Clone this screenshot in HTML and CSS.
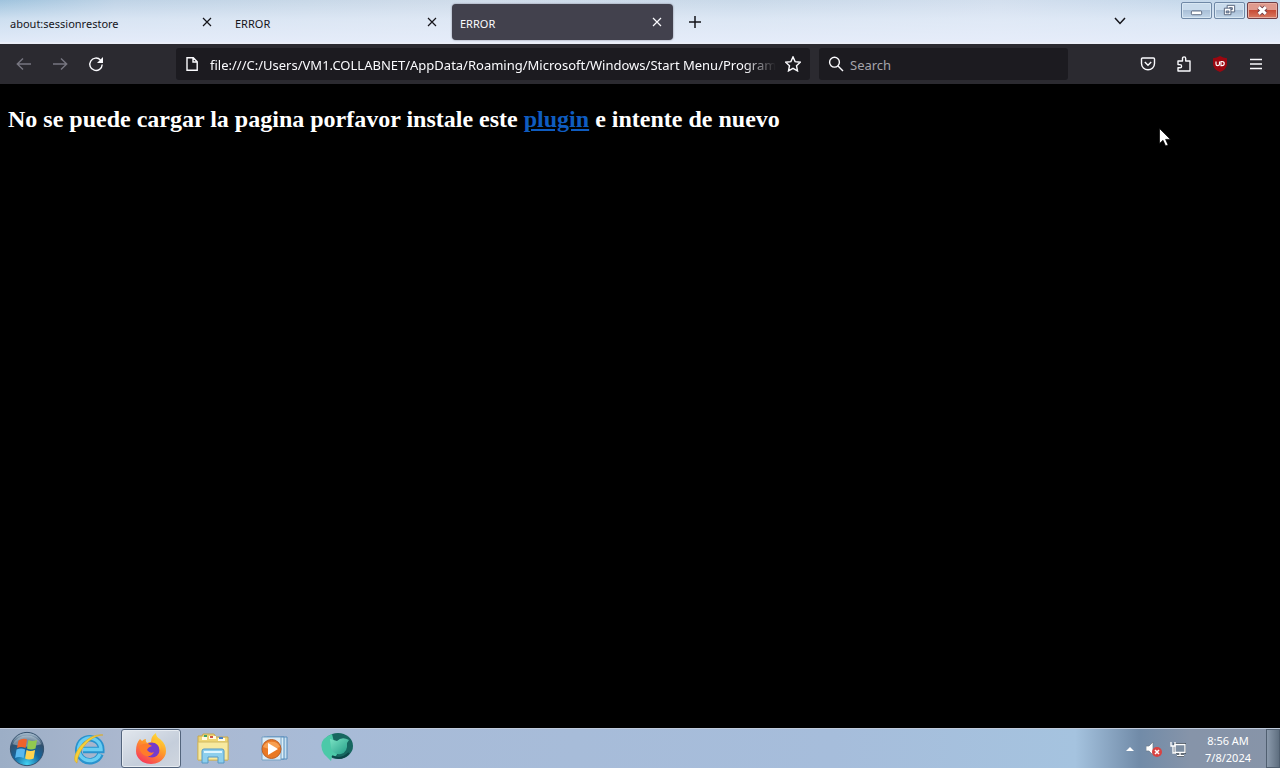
FILE: index.html
```html
<!DOCTYPE html>
<html lang="es">
<head>
<meta charset="utf-8">
<meta name="viewport" content="width=device-width, initial-scale=1">
<title>ERROR</title>
<link rel="stylesheet" href="styles.css">
</head>
<body>
<header class="titlebar">
  <div class="tabs">
    <div class="tab"><button class="tab-title">about:sessionrestore</button><button class="tab-close" aria-label="Close tab"><svg viewBox="0 0 10 10"><path d="M1 1l8 8M9 1l-8 8"/></svg></button></div>
    <div class="tab"><button class="tab-title">ERROR</button><button class="tab-close" aria-label="Close tab"><svg viewBox="0 0 10 10"><path d="M1 1l8 8M9 1l-8 8"/></svg></button></div>
    <div class="tab active"><button class="tab-title">ERROR</button><button class="tab-close" aria-label="Close tab"><svg viewBox="0 0 10 10"><path d="M1 1l8 8M9 1l-8 8"/></svg></button></div>
    <button class="new-tab" aria-label="New tab"><svg viewBox="0 0 12 12"><path d="M6 0v12M0 6h12"/></svg></button>
  </div>
  <button class="all-tabs" aria-label="List all tabs"><svg viewBox="0 0 12 8"><path d="M1 1l5 5.500 5-5.500"/></svg></button>
  <div class="window-buttons">
    <button class="win" aria-label="Minimize"><svg viewBox="0 0 30 16"><rect x="9.500" y="8.500" width="11" height="4" rx="1" fill="#fff" stroke="#53617a"/></svg></button>
    <button class="win" aria-label="Restore"><svg viewBox="0 0 30 16"><path d="M12.500 2.500h8v7h-8z" fill="#fff" stroke="#53617a"/><path d="M15 5h3v2h-3z" fill="#9fb3cf" stroke="#53617a"/><path d="M9.500 5.500h7v7h-7z" fill="#fff" stroke="#53617a"/><path d="M11.500 8.500h3v2h-3z" fill="#9fb3cf" stroke="#53617a"/></svg></button>
    <button class="win close" aria-label="Close"><svg viewBox="0 0 30 16"><path d="M11 4.500l7.500 7M18.500 4.500l-7.500 7" stroke="#6c3a42" stroke-width="5"/><path d="M11 4.500l7.500 7M18.500 4.500l-7.500 7" stroke="#fff" stroke-width="3.200"/></svg></button>
  </div>
</header>
<nav class="toolbar">
  <div class="nav-buttons">
    <button class="tool dim" aria-label="Back"><svg viewBox="0 0 16 16"><path d="M15 8H1.500M7 2.500L1.300 8 7 13.500"/></svg></button>
    <button class="tool dim" aria-label="Forward"><svg viewBox="0 0 16 16"><path d="M1 8h13.500M9 2.500l5.700 5.500L9 13.500"/></svg></button>
    <button class="tool" aria-label="Reload"><svg viewBox="0 0 16 16"><path d="M12.500 4A6.200 6.200 0 1 0 14.200 8.500"/><path class="solid" d="M15 1v6H9z"/></svg></button>
  </div>
  <div class="url-field">
    <svg class="icon" viewBox="0 0 16 16"><path d="M3 1.700h6.300L13.200 5.700V14.300H3zM9 2v4h4"/></svg>
    <input class="url-input" type="text" aria-label="Address" value="file:///C:/Users/VM1.COLLABNET/AppData/Roaming/Microsoft/Windows/Start Menu/Programs">
    <button class="star" aria-label="Bookmark"><svg class="icon" viewBox="0 0 16 16"><path d="M8 .9l2.100 4.700 5.200.6-3.800 3.500 1 5.200L8 12.400l-4.500 2.500 1-5.200L.7 6.200l5.200-.6z"/></svg></button>
  </div>
  <div class="search-field">
    <svg class="icon" viewBox="0 0 16 16"><circle cx="6.500" cy="6.200" r="4.900"/><path d="M10 10l5 5"/></svg>
    <input class="search-input" type="text" aria-label="Search" placeholder="Search">
  </div>
  <div class="extras">
    <button class="tool" aria-label="Save to Pocket"><svg viewBox="0 0 16 16"><path d="M2.500 2h11q1 0 1 1v4.500a6.500 6.300 0 0 1-13 0V3q0-1 1-1z"/><path d="M4.800 6L8 9.200 11.200 6"/></svg></button>
    <button class="tool" aria-label="Extensions"><svg viewBox="0 0 16 16"><path d="M2 5h4.500V2.500a1.600 1.600 0 0 1 3.200 0V5H14v10H2v-3.200h2a1.600 1.600 0 0 0 0-3.200H2z" stroke-linejoin="round"/></svg></button>
    <button class="tool" aria-label="Content blocker"><svg viewBox="0 0 16 16"><path class="shield" d="M8 0q3 2 7 2.300V8q0 5-7 8-7-3-7-8V2.300Q5 2 8 0z"/><path class="letters" d="M4 5.500V8q0 1.700 1.700 1.700T7.500 8V5.500M9 5.500v4.200h1q2.200 0 2.200-2.100T10 5.500z"/></svg></button>
    <button class="tool" aria-label="Menu"><svg viewBox="0 0 16 16"><path d="M2 3.500h12M2 8h12M2 12.500h12"/></svg></button>
  </div>
</nav>
<main class="page">
  <h2 class="message">No se puede cargar la pagina porfavor instale este <a class="plugin-link" href="#">plugin</a> e intente de nuevo</h2>
</main>
<svg class="cursor" viewBox="0 0 12 19" aria-hidden="true"><path d="M.5 .5v15l3.500-3.200 2.600 5.700 2.500-1.100-2.500-5.500h4.900z" fill="#fff" stroke="#000" stroke-width=".7"/></svg>
<footer class="taskbar">
  <button class="start" aria-label="Start"><svg viewBox="0 0 40 40">
    <defs><radialGradient id="orb" cx=".5" cy=".95" r=".9"><stop offset="0" stop-color="#43d2f2"/><stop offset=".45" stop-color="#14659f"/><stop offset=".8" stop-color="#32506c"/><stop offset="1" stop-color="#9db4c7"/></radialGradient></defs>
    <circle cx="20" cy="20" r="17.500" fill="url(#orb)" stroke="#304d69"/>
    <path d="M5 15a16 14 0 0 1 30 0q-15 5-30 0z" fill="#dce8f0" opacity=".4"/>
    <path d="M11 11q5-3 9-1l-1.500 9q-5-2-9 0z" fill="#ee632c"/><path d="M21.500 10.500q4 2 9 0l-1.500 9q-5 2-9 0z" fill="#91c950"/><path d="M9 20.500q5-2 9 0l-1.500 9q-5-2-9 0z" fill="#58b8ef"/><path d="M19.500 21q4 2 9 0l-1.500 9q-5 2-9 0z" fill="#ffd34f"/>
  </svg></button>
  <div class="apps">
    <button class="app" aria-label="Internet Explorer"><svg viewBox="0 0 34 34">
      <path d="M28.500 22A11.500 11.500 0 1 1 29.300 18H11" fill="none" stroke="#2993ce" stroke-width="6.500"/><path d="M28 22A11.200 11.200 0 1 1 29 17.500H11" fill="none" stroke="#69cdf2" stroke-width="3.500"/>
      <path d="M5 31C-4 27 14 0 31 3 20 3 6 17 5 31z" fill="#f5cf38" stroke="#d6a82a" stroke-width=".6"/></svg></button>
    <button class="app running" aria-label="Firefox"><svg viewBox="0 0 34 34">
      <defs><linearGradient id="fox" x1=".8" y1="0" x2=".2" y2="1"><stop offset="0" stop-color="#ffe538"/><stop offset=".45" stop-color="#ff982b"/><stop offset="1" stop-color="#f6315f"/></linearGradient></defs>
      <path d="M6 7l2 2q2-2 4-2-1 2 1 4 2-1 4-1Q17 4 22 1q0 4 4 6 6 5 6 12a15 13 0 0 1-30 0Q2 11 6 7z" fill="url(#fox)"/>
      <circle cx="18" cy="18" r="7.500" fill="#743ccd"/><path d="M5 14q7-5 13 0-4 1-5 4 3 4 7 2-2 5-8 4-6-2-7-10z" fill="#ff7c2a"/><path d="M18 10q8 1 8 9 2-8-4-12z" fill="#ffc52f"/></svg></button>
    <button class="app" aria-label="Windows Explorer"><svg viewBox="0 0 34 34">
      <path d="M2 4h4l1-2h11l2 3h12v23H2z" fill="#eed574" stroke="#c6a750"/><path d="M6 5h5v3H6zM13 4h7v3h-7zM22 6h7v3h-7z" fill="#fffbe5"/><path d="M8 3h3v2H8z" fill="#41a265"/><path d="M14 4h3v2h-3z" fill="#cf5547"/><path d="M23 5h4v2h-4z" fill="#4981c6"/><path d="M2 10h30v18H2z" fill="#f7e99f" stroke="#d3ba63"/>
      <path d="M6 31V19q0-2 2-2h18q2 0 2 2v12h-6v-6H12v6z" fill="#8dcfed" stroke="#5499c6"/><path d="M8 20h18" stroke="#dff6ff" stroke-width="2"/></svg></button>
    <button class="app" aria-label="Windows Media Player"><svg viewBox="0 0 34 34">
      <path d="M9 5h20v22H9z" fill="#c8e0f1" stroke="#568dbc"/><path d="M6 5h20v22H6z" fill="#d9edf7" stroke="#568dbc"/><path d="M4 5h19v23H4z" fill="#d9ebf6" stroke="#76a1c4"/><circle cx="13.500" cy="17" r="9.500" fill="#e97824" stroke="#b9612b"/><path d="M5 15a9 8 0 0 1 17 0q-8 4-17 0z" fill="#ffb56c" opacity=".65"/><path d="M10 11l10 6-10 6z" fill="#fff"/></svg></button>
    <button class="app" aria-label="Assistant"><svg viewBox="0 0 34 34">
      <defs><linearGradient id="bird" x1="0" y1="0" x2="1" y2="1"><stop offset="0" stop-color="#7be3c4"/><stop offset="1" stop-color="#229c86"/></linearGradient></defs>
      <ellipse cx="18" cy="14" rx="15" ry="13" fill="#176760"/><path d="M12 2Q-4 8 4 22l7 7 1-4q6 0 5-5-6-4-3-10z" fill="#4cc9a8"/><path d="M10 7l7 2q5-5 12-1l-2 3q1 9-6 11-8 1-10-6z" fill="url(#bird)"/><path d="M12 24q9 5 17-3" fill="none" stroke="#0d4548" stroke-width="2"/></svg></button>
  </div>
  <div class="tray">
    <button class="tray-icon" aria-label="Show hidden icons"><svg viewBox="0 0 16 16"><path d="M4 10l4-4 4 4z" fill="#fff"/></svg></button>
    <button class="tray-icon" aria-label="Volume muted"><svg viewBox="0 0 16 16"><path d="M0 5h3l4-4v13l-4-4H0z" fill="#fff" stroke="#6b7888" stroke-width=".7"/><circle cx="11" cy="11" r="5" fill="#d94342"/><path d="M9 9l4 4M13 9l-4 4" stroke="#fff" stroke-width="1.500"/></svg></button>
    <button class="tray-icon" aria-label="Network"><svg viewBox="0 0 16 16"><path d="M5 3.500h10v8H5zM7 14.500h7M10 12v2" fill="#7c8da1" stroke="#303c4a" stroke-width="3"/><path d="M5 3.500h10v8H5zM7 14.500h7M10 12v2" fill="#7c8da1" stroke="#fff" stroke-width="1.300"/><path d="M1 1v4h4V1M3 5v7h3" fill="none" stroke="#fff" stroke-width="1.300"/></svg></button>
    <div class="clock"><time>8:56 AM</time><time>7/8/2024</time></div>
    <button class="show-desktop" aria-label="Show desktop"></button>
  </div>
</footer>
</body>
</html>
```

FILE: styles.css
```css
* { box-sizing: border-box; }
body {
  margin: 0;
  min-height: 100vh;
  display: flex;
  flex-direction: column;
  background: #000;
  font-family: "Noto Sans", "Open Sans", sans-serif;
}
button {
  margin: 0;
  padding: 0;
  border: 0;
  background: none;
  color: inherit;
  font: inherit;
}
svg { display: block; }

.titlebar {
  display: flex;
  height: 44px;
  background:
    linear-gradient(to bottom, transparent 0, rgba(230, 238, 250, .65) 45%, rgba(232, 238, 251, .9) 100%),
    linear-gradient(90deg, #9fc3dd 0, #bfd3e6 9%, #c8d8e8 24%, #d0dcea 38%, #c9d9e9 58%, #d3dfee 78%, #bfd5e9 100%);
  border-bottom: 2px solid #eaeef8;
  color: #15141a;
}
.tabs { flex: 1; display: flex; align-items: center; gap: 4px; padding: 2px 0 0 2px; }
.tab {
  display: flex;
  align-items: center;
  flex: 0 1 221px;
  height: 36px;
  padding: 0 8px;
  border-radius: 4px;
  font-size: 11px;
}
.tab.active { background: #42414d; color: #fbfbfe; box-shadow: 0 0 2px #777886; }
.tab-title { flex: 1; padding-top: 2px; text-align: left; }
.tab-close { display: grid; place-items: center; width: 16px; height: 20px; }
.tab-close svg { width: 10px; height: 10px; }
.tab-close path, .new-tab path, .all-tabs path { fill: none; stroke: currentColor; stroke-width: 1.2; }
.new-tab path, .all-tabs path { stroke-width: 1.5; }
.new-tab { display: grid; place-items: center; width: 36px; height: 36px; }
.new-tab svg { width: 12px; height: 12px; }
.all-tabs { display: grid; place-items: center; width: 36px; margin-right: 43px; }
.all-tabs svg { width: 12px; height: 8px; }
.window-buttons { display: flex; gap: 2px; padding: 2px 2px 0 0; }
.win {
  width: 31px;
  height: 17px;
  border: 1px solid #6f88a6;
  border-radius: 2px;
  background: linear-gradient(#c9dbec 48%, #a9bfd7 50%, #c2d6e9);
  box-shadow: inset 0 0 0 1px #d8e7f3;
}
.win svg { width: 100%; height: 100%; }
.win.close {
  border-color: #713d44;
  background: linear-gradient(#df9a8d 45%, #c84c36 50%, #d97a62);
  box-shadow: inset 0 0 0 1px #e8afa2;
}

.toolbar { display: flex; align-items: center; height: 40px; background: #2b2a30; color: #fbfbfe; }
.nav-buttons { display: flex; gap: 4px; padding-left: 8px; flex: 0 0 176px; }
.tool { display: grid; place-items: center; width: 32px; height: 32px; }
.tool svg, .icon { width: 16px; height: 16px; flex: none; }
.tool path, .icon { fill: none; stroke: currentColor; stroke-width: 1.4; }
.tool .solid { fill: currentColor; stroke: none; }
.tool .shield { fill: #9b0710; stroke: none; }
.tool .letters { stroke: #fff; stroke-width: 1.2; }
.tool.dim { color: #777680; }
.url-field, .search-field { display: flex; align-items: center; height: 32px; background: #1c1b20; border-radius: 3px; }
.url-field { flex: 1; padding: 0 9px 0 8px; }
.search-field { flex: 0 1 249px; margin-left: 9px; padding: 0 9px; }
.url-input, .search-input {
  min-width: 0;
  flex: 1;
  border: 0;
  padding: 2px 0 0;
  outline: 0;
  background: transparent;
  color: #fbfbfe;
  font: 13px "Noto Sans", "Open Sans", sans-serif;
}
.url-input {
  margin: 0 9px 0 10px;
  mask-image: linear-gradient(to left, transparent, #000 32px);
}
.search-input { margin-left: 6px; }
.search-input::placeholder { color: #a5a4aa; opacity: 1; }
.extras { display: flex; gap: 4px; margin-left: 64px; padding-right: 8px; }

.page { flex: 1; padding: 0 8px; color: #fff; font-family: "Liberation Serif", serif; }
.message { margin: 21px 0; font-size: 24px; line-height: 28px; font-weight: bold; }
.plugin-link { color: #0f5cc0; text-decoration: underline; }
.cursor { position: absolute; left: 1159px; top: 128px; width: 12px; height: 19px; }

.taskbar {
  display: flex;
  align-items: center;
  height: 40px;
  border-top: 1px solid #c0cbdc;
  background: linear-gradient(90deg, #9caec6 0, #abb8cf 10%, #a8bbd7 25%, #a6bddb 65%, #a5c3df 84%, #718ba8 89%, #8694a9 93%, #8794a8 100%);
}
.start { width: 54px; height: 39px; display: grid; place-items: center; }
.start svg { width: 40px; height: 38px; }
.apps { flex: 1; display: flex; gap: 2px; padding-left: 5px; }
.app { width: 60px; height: 39px; display: grid; place-items: center; border: 1px solid transparent; border-radius: 3px; }
.app svg { width: 34px; height: 34px; }
.app.running {
  border-color: #53647c;
  background: linear-gradient(150deg, #e2e7ed, #c5cedb 60%, #d0d6df);
  box-shadow: inset 0 0 0 1px #e6ebf1;
}
.tray { display: flex; align-items: center; height: 39px; color: #fff; }
.tray-icon { width: 24px; height: 32px; display: grid; place-items: center; }
.tray-icon svg { width: 16px; height: 16px; }
.clock { width: 76px; display: flex; flex-direction: column; align-items: center; font-size: 11px; line-height: 17px; }
.show-desktop {
  width: 14px;
  height: 39px;
  border: 1px solid #505f70;
  background: linear-gradient(90deg, #8b9aac, #5f6f80);
}
```
